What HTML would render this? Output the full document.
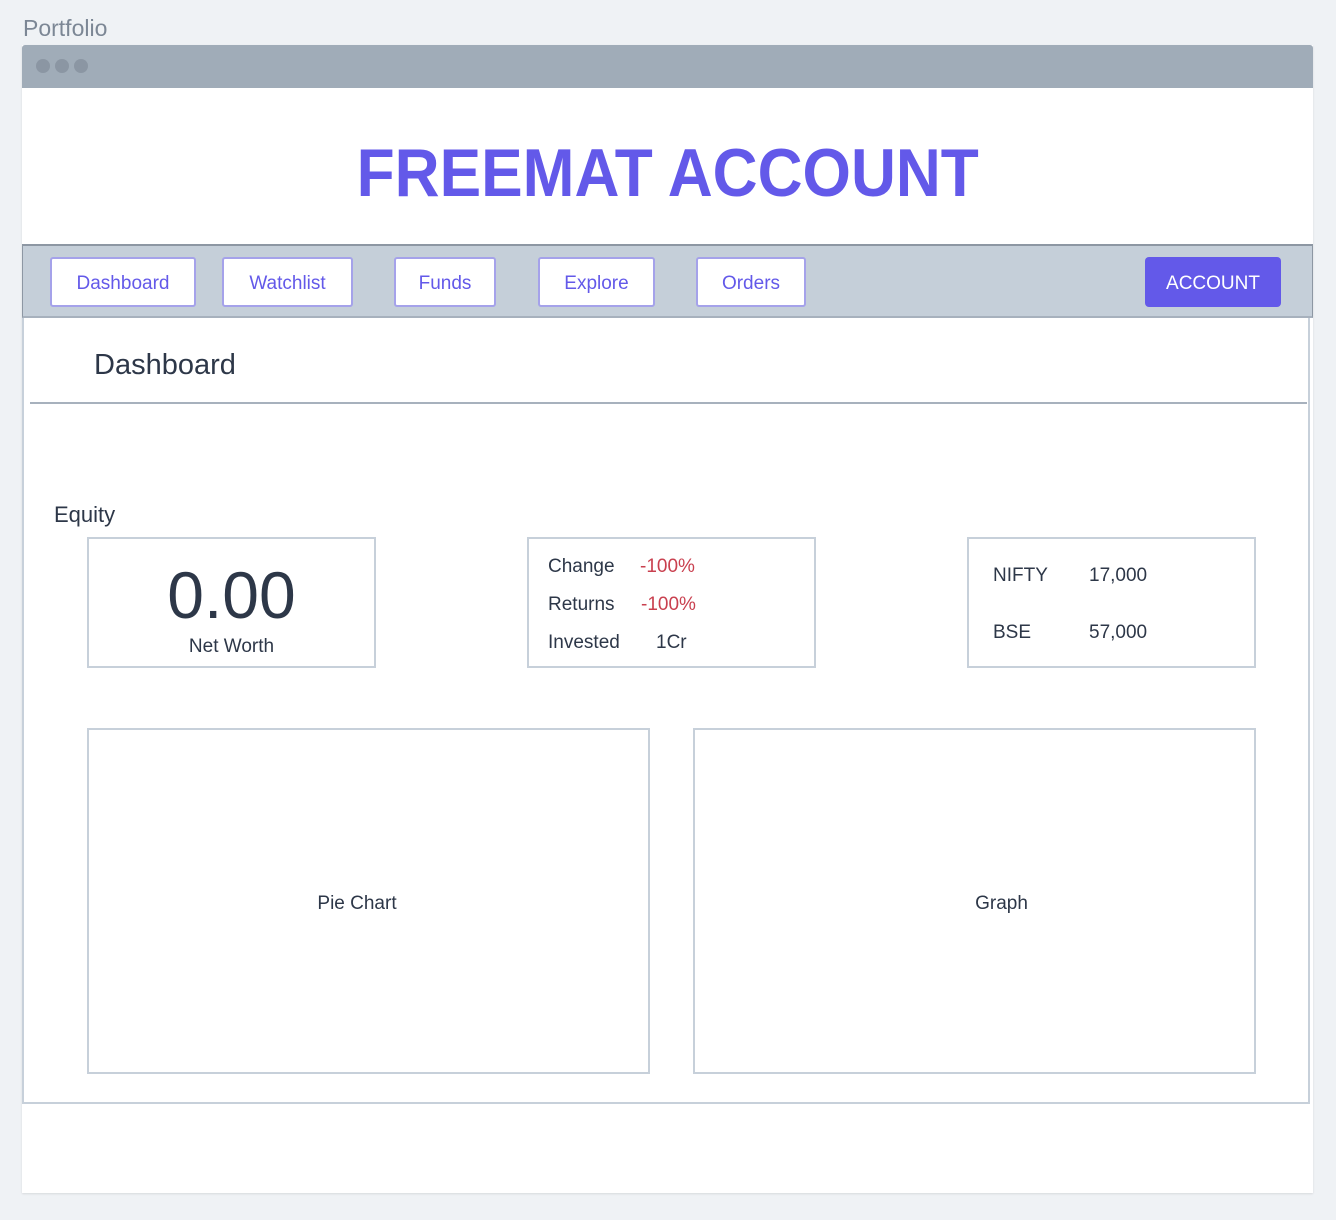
<!DOCTYPE html>
<html><head><style>
*{margin:0;padding:0;box-sizing:border-box}
body{width:1336px;height:1220px;background:#eff2f5;font-family:"Liberation Sans",sans-serif;position:relative;overflow:hidden;color:#2d3748}
.a{position:absolute}
.btn{position:absolute;top:257px;height:50px;background:#fff;border:2px solid #a5a2ea;border-radius:3px;color:#6359e9;font-size:19px;display:flex;align-items:center;justify-content:center;padding-top:4px}
.box{position:absolute;border:2px solid #c7d0da;background:#fff}
.t{position:absolute;font-size:19px;color:#2d3748;white-space:nowrap}
.r{color:#c9404f}
</style></head><body>
<div class="a" style="left:23px;top:15px;font-size:23px;color:#7c8795">Portfolio</div>
<div class="a" style="left:22px;top:45px;width:1291px;height:1148px;background:#fff;box-shadow:0 1px 2px rgba(0,0,0,.1)"></div>
<div class="a" style="left:22px;top:45px;width:1291px;height:43px;background:#a0acb8;border-radius:3px 3px 0 0"></div>
<div class="a" style="left:36px;top:59px;width:14px;height:14px;border-radius:50%;background:#8b96a3"></div>
<div class="a" style="left:55px;top:59px;width:14px;height:14px;border-radius:50%;background:#8b96a3"></div>
<div class="a" style="left:74px;top:59px;width:14px;height:14px;border-radius:50%;background:#8b96a3"></div>
<div class="a" style="left:0;width:1336px;top:134px;text-align:center;font-size:68px;font-weight:bold;color:#6359e9;transform:scaleX(0.915);transform-origin:665px 0">FREEMAT ACCOUNT</div>
<div class="a" style="left:22px;top:244px;width:1291px;height:74px;background:#c5cfd9;border-top:2px solid #8d97a3;border-left:1px solid #8d97a3;border-right:1px solid #8d97a3;border-bottom:2px solid #a7b1bd"></div>
<div class="btn" style="left:50px;width:146px">Dashboard</div>
<div class="btn" style="left:222px;width:131px">Watchlist</div>
<div class="btn" style="left:394px;width:102px">Funds</div>
<div class="btn" style="left:538px;width:117px">Explore</div>
<div class="btn" style="left:696px;width:110px">Orders</div>
<div class="a" style="left:1145px;top:257px;width:136px;height:50px;background:#6359e9;border-radius:4px;color:#fff;font-size:19px;display:flex;align-items:center;justify-content:center;padding-top:4px">ACCOUNT</div>
<div class="a" style="left:22px;top:318px;width:1288px;height:786px;border:2px solid #c7d0da;border-top:none"></div>
<div class="a" style="left:94px;top:349px;font-size:29px;color:#2d3748">Dashboard</div>
<div class="a" style="left:30px;top:402px;width:1277px;height:2px;background:#a7b1bd"></div>
<div class="t" style="left:54px;top:502px;font-size:22px">Equity</div>
<div class="box" style="left:87px;top:537px;width:289px;height:131px"></div>
<div class="t" style="left:87px;width:289px;text-align:center;top:557px;font-size:66px">0.00</div>
<div class="t" style="left:87px;width:289px;text-align:center;top:636px">Net Worth</div>
<div class="box" style="left:527px;top:537px;width:289px;height:131px"></div>
<div class="t" style="left:548px;top:556px">Change</div><div class="t r" style="left:640px;top:556px">-100%</div>
<div class="t" style="left:548px;top:594px">Returns</div><div class="t r" style="left:641px;top:594px">-100%</div>
<div class="t" style="left:548px;top:632px">Invested</div><div class="t" style="left:656px;top:632px">1Cr</div>
<div class="box" style="left:967px;top:537px;width:289px;height:131px"></div>
<div class="t" style="left:993px;top:565px">NIFTY</div><div class="t" style="left:1089px;top:565px">17,000</div>
<div class="t" style="left:993px;top:622px">BSE</div><div class="t" style="left:1089px;top:622px">57,000</div>
<div class="box" style="left:87px;top:728px;width:563px;height:346px"></div>
<div class="t" style="left:87px;width:540px;text-align:center;top:893px">Pie Chart</div>
<div class="box" style="left:693px;top:728px;width:563px;height:346px"></div>
<div class="t" style="left:693px;width:617px;text-align:center;top:893px">Graph</div>
</body></html>
